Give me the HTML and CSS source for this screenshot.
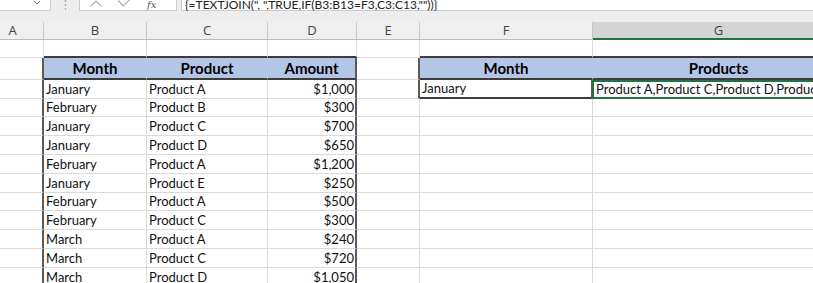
FILE: index.html
```html
<!DOCTYPE html>
<html>
<head>
<meta charset="utf-8">
<link rel="stylesheet" href="styles.css">
</head>
<body>
<div class="fbar">
  <div class="namebox">
    <svg class="chev" width="8" height="6" viewBox="0 0 8 6"><polyline points="1,1 4,4 7,1" fill="none" stroke="#777" stroke-width="1"/></svg>
  </div>
  <div class="sep">
    <svg width="3" height="11" viewBox="0 0 3 11"><circle cx="1.5" cy="1" r="0.9" fill="#aaa"/><circle cx="1.5" cy="5" r="0.9" fill="#aaa"/><circle cx="1.5" cy="9" r="0.9" fill="#aaa"/></svg>
  </div>
  <div class="btns">
    <svg class="ico-x" width="12" height="8" viewBox="0 0 12 8"><polyline points="0.5,6.5 6,1 11.5,6.5" fill="none" stroke="#b0b0b0" stroke-width="1.2"/></svg>
    <svg class="ico-ok" width="14" height="8" viewBox="0 0 14 8"><polyline points="0.5,0.5 5,6 13.5,-2" fill="none" stroke="#b0b0b0" stroke-width="1.2"/></svg>
    <span class="fx">fx</span>
  </div>
  <div class="formula">{=TEXTJOIN(", ",TRUE,IF(B3:B13=F3,C3:C13,""))}</div>
</div>
<div class="sheet">
  <div class="cell colh">A</div>
  <div class="cell colh">B</div>
  <div class="cell colh">C</div>
  <div class="cell colh">D</div>
  <div class="cell colh">E</div>
  <div class="cell colh">F</div>
  <div class="cell colh sel">G</div>

  <div class="cell"></div>
  <div class="cell above"></div>
  <div class="cell above"></div>
  <div class="cell above"></div>
  <div class="cell"></div>
  <div class="cell above"></div>
  <div class="cell above"></div>

  <div class="cell edge"></div>
  <div class="cell hd in">Month</div>
  <div class="cell hd in">Product</div>
  <div class="cell hd edge">Amount</div>
  <div class="cell edge"></div>
  <div class="cell hd in">Month</div>
  <div class="cell hd">Products</div>

  <div class="cell edge"></div>
  <div class="cell">January</div>
  <div class="cell">Product A</div>
  <div class="cell r edge">$1,000</div>
  <div class="cell edge"></div>
  <div class="cell edge boxed">January</div>
  <div class="cell active">Product A,Product C,Product D,Product E</div>

  <div class="cell edge"></div>
  <div class="cell">February</div>
  <div class="cell">Product B</div>
  <div class="cell r edge">$300</div>
  <div class="cell"></div>
  <div class="cell"></div>
  <div class="cell"></div>

  <div class="cell edge"></div>
  <div class="cell">January</div>
  <div class="cell">Product C</div>
  <div class="cell r edge">$700</div>
  <div class="cell"></div>
  <div class="cell"></div>
  <div class="cell"></div>

  <div class="cell edge"></div>
  <div class="cell">January</div>
  <div class="cell">Product D</div>
  <div class="cell r edge">$650</div>
  <div class="cell"></div>
  <div class="cell"></div>
  <div class="cell"></div>

  <div class="cell edge"></div>
  <div class="cell">February</div>
  <div class="cell">Product A</div>
  <div class="cell r edge">$1,200</div>
  <div class="cell"></div>
  <div class="cell"></div>
  <div class="cell"></div>

  <div class="cell edge"></div>
  <div class="cell">January</div>
  <div class="cell">Product E</div>
  <div class="cell r edge">$250</div>
  <div class="cell"></div>
  <div class="cell"></div>
  <div class="cell"></div>

  <div class="cell edge"></div>
  <div class="cell">February</div>
  <div class="cell">Product A</div>
  <div class="cell r edge">$500</div>
  <div class="cell"></div>
  <div class="cell"></div>
  <div class="cell"></div>

  <div class="cell edge"></div>
  <div class="cell">February</div>
  <div class="cell">Product C</div>
  <div class="cell r edge">$300</div>
  <div class="cell"></div>
  <div class="cell"></div>
  <div class="cell"></div>

  <div class="cell edge"></div>
  <div class="cell">March</div>
  <div class="cell">Product A</div>
  <div class="cell r edge">$240</div>
  <div class="cell"></div>
  <div class="cell"></div>
  <div class="cell"></div>

  <div class="cell edge"></div>
  <div class="cell">March</div>
  <div class="cell">Product C</div>
  <div class="cell r edge">$720</div>
  <div class="cell"></div>
  <div class="cell"></div>
  <div class="cell"></div>

  <div class="cell edge"></div>
  <div class="cell">March</div>
  <div class="cell">Product D</div>
  <div class="cell r edge">$1,050</div>
  <div class="cell"></div>
  <div class="cell"></div>
  <div class="cell"></div>
</div>
</body>
</html>
```
FILE: styles.css
```css
html, body {
  margin: 0;
  padding: 0;
  background: #ffffff;
}
body {
  width: 813px;
  height: 283px;
  overflow: hidden;
  font-family: Lato, "Open Sans", sans-serif;
}
.fbar {
  display: flex;
  align-items: flex-start;
  height: 22px;
  background: #ededed;
}
.namebox {
  box-sizing: border-box;
  width: 51px;
  height: 11px;
  background: #fff;
  border-right: 1px solid #cbcbcb;
  border-bottom: 1px solid #cbcbcb;
  display: flex;
  justify-content: flex-end;
  align-items: flex-start;
  padding-right: 9px;
}
.chev {
  display: block;
}
.sep {
  width: 28px;
  height: 11px;
  display: flex;
  justify-content: center;
}
.sep svg { display: block; }
.btns {
  box-sizing: border-box;
  width: 98px;
  height: 11px;
  background: #fff;
  border: 1px solid #cbcbcb;
  border-top: 0;
  display: flex;
  align-items: flex-start;
}
.ico-x {
  display: block;
  margin-left: 10px;
}
.ico-ok {
  display: block;
  margin-left: 16px;
}
.fx {
  margin-left: 15px;
  font-family: "DejaVu Serif", serif;
  font-style: italic;
  font-size: 10px;
  line-height: 9px;
  color: #555;
}
.formula {
  box-sizing: border-box;
  flex: 1;
  height: 11px;
  margin-left: 4px;
  background: #fff;
  border-left: 1px solid #cbcbcb;
  border-bottom: 1px solid #cbcbcb;
  padding-left: 3px;
  font-size: 12px;
  line-height: 9px;
  color: #222;
  white-space: nowrap;
}
.sheet {
  display: grid;
  grid-template-columns: 62px 103px 121px 89px 63px 173px 252px;
  grid-template-rows: 17.5px 18.8px 21.5px repeat(11, 18.8px);
  margin-left: -18px;
}
.cell {
  box-sizing: border-box;
  min-width: 0;
  border-right: 1px solid #dadada;
  border-bottom: 1px solid #dadada;
  display: flex;
  align-items: flex-end;
  padding: 0 2px 1px 2px;
  font-size: 13px;
  line-height: 15px;
  color: #111;
  white-space: nowrap;
  overflow: hidden;
}
.colh {
  background: #efefef;
  border-right-color: #c6c6c6;
  border-bottom-color: #bdbdbd;
  align-items: center;
  justify-content: center;
  padding: 0;
  font-family: "Open Sans", sans-serif;
  font-size: 13px;
  line-height: 14px;
  color: #444;
}
.colh.sel {
  background: #d4d4d4;
  border-bottom: 2px solid #217346;
}
.above {
  border-bottom: 2px solid #3c3c3c;
}
.hd {
  background: #b4c6e7;
  font-weight: 700;
  font-size: 15px;
  line-height: 17px;
  color: #000;
  justify-content: center;
  align-items: center;
  padding: 0;
  border-bottom: 2px solid #3c3c3c;
}
.hd.in {
  border-right-color: #b4c6e7;
}
.edge {
  border-right: 2px solid #5a5a5a;
}
.hd.edge {
  border-right: 2px solid #5a5a5a;
}
.r {
  justify-content: flex-end;
  padding-right: 1px;
}
.boxed {
  border-bottom: 2px solid #3c3c3c;
}
.active {
  position: relative;
  overflow: visible;
  padding-left: 3px;
}
.active::after {
  content: "";
  position: absolute;
  left: -1px;
  top: 0;
  right: -2px;
  bottom: -1px;
  border: 2px solid #217346;
}
```
